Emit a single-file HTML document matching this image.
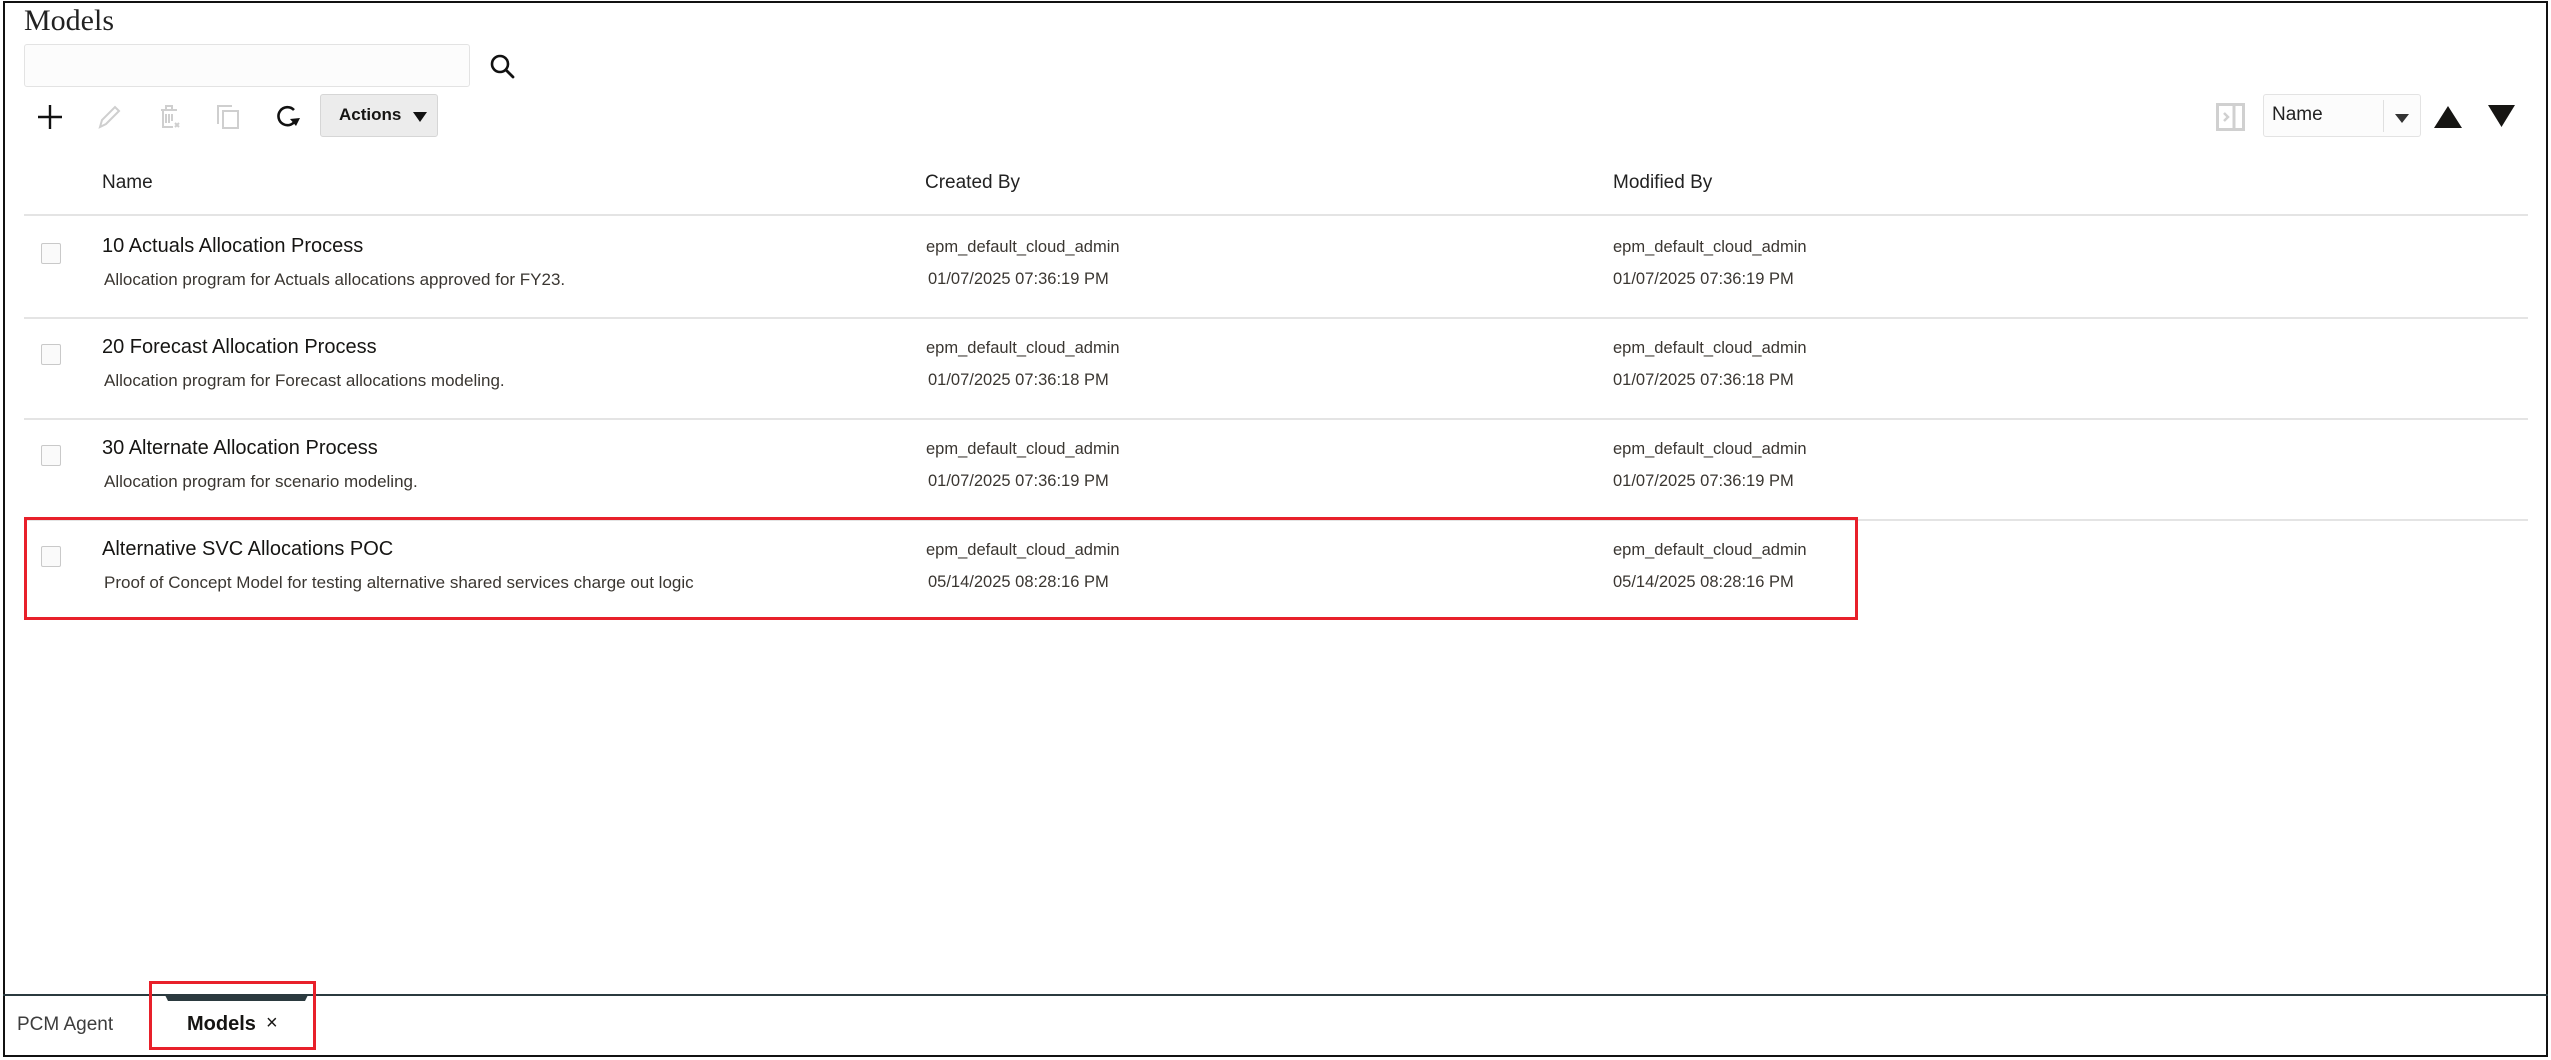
<!DOCTYPE html>
<html><head><meta charset="utf-8"><style>
*{margin:0;padding:0;box-sizing:border-box}
body{width:2551px;height:1060px;background:#fff;position:relative;overflow:hidden;font-family:"Liberation Sans",sans-serif;color:#161513}
.a{position:absolute;white-space:nowrap}
.frame{position:absolute;left:3px;top:1px;width:2545px;height:1056px;border:2px solid #111}
.hl{position:absolute;height:2px;background:#e4e4e4;left:24px;width:2504px}
.t{font-size:20px;color:#161513}
.d{font-size:17px;color:#3a3631}
.v{font-size:16.5px;color:#3a3631}
.cb{position:absolute;left:41px;width:20px;height:21px;border:1px solid #c9c9c9;border-radius:2px;background:#fafafa}
</style></head><body>
<div class="frame"></div>
<div class="a" style="left:24px;top:4px;font-family:'Liberation Serif',serif;font-size:30px;color:#222">Models</div>
<div class="a" style="left:24px;top:44px;width:446px;height:43px;border:1px solid #e3e3e3;border-radius:3px;background:#fcfcfc"></div>
<svg class="a" style="left:489px;top:53px" width="28" height="26" viewBox="0 0 28 26"><circle cx="11" cy="11" r="8" fill="none" stroke="#111" stroke-width="2.6"/><path d="M17 17L24 24" stroke="#111" stroke-width="2.8" stroke-linecap="round"/></svg>
<svg class="a" style="left:37px;top:104px" width="26" height="26"><path d="M13 1V25M1 13H25" stroke="#111" stroke-width="2.4"/></svg>
<svg class="a" style="left:96px;top:104px" width="26" height="26"><path d="M4 23L6 16L19 3L23 7L10 20Z" fill="none" stroke="#cfcfcf" stroke-width="2"/></svg>
<svg class="a" style="left:156px;top:104px" width="26" height="26"><path d="M5 6H21M10 6V2H16V6M7 6V23H17M10 10V19M13 10V19M16 10V17M19 19L23 23M23 19L19 23" fill="none" stroke="#cfcfcf" stroke-width="2"/></svg>
<svg class="a" style="left:215px;top:104px" width="26" height="26"><path d="M3 20V2H17" fill="none" stroke="#cfcfcf" stroke-width="2"/><rect x="8" y="7" width="15" height="17" fill="none" stroke="#cfcfcf" stroke-width="2"/></svg>
<svg class="a" style="left:274px;top:104px" width="28" height="26"><path d="M20 6A9 9 0 1 0 22 15" fill="none" stroke="#111" stroke-width="2.6"/><path d="M16 15L22 22L26 14Z" fill="#111"/></svg>
<div class="a" style="left:320px;top:94px;width:118px;height:43px;border:1px solid #d6d6d6;border-radius:3px;background:#ececec"></div>
<div class="a" style="left:339px;top:105px;font-size:17px;font-weight:bold">Actions</div>
<svg class="a" style="left:413px;top:112px" width="14" height="10"><path d="M0 0H14L7 10Z" fill="#111"/></svg>
<svg class="a" style="left:2216px;top:103px" width="29" height="28"><rect x="1.5" y="1.5" width="26" height="25" fill="none" stroke="#d0d0d0" stroke-width="3"/><path d="M18 2V26" stroke="#d0d0d0" stroke-width="3"/><path d="M8 10L12 14L8 18" fill="none" stroke="#d0d0d0" stroke-width="2.5"/></svg>
<div class="a" style="left:2263px;top:94px;width:158px;height:43px;border:1px solid #e3e3e3;border-radius:3px;background:#fcfcfc"></div>
<div class="a" style="left:2383px;top:100px;width:1px;height:32px;background:#e0e0e0"></div>
<div class="a" style="left:2272px;top:104px;font-size:19px;color:#222">Name</div>
<svg class="a" style="left:2395px;top:114px" width="14" height="9"><path d="M0 0H14L7 9Z" fill="#333"/></svg>
<svg class="a" style="left:2434px;top:106px" width="28" height="22"><path d="M0 22H28L14 0Z" fill="#161513"/></svg>
<svg class="a" style="left:2488px;top:105px" width="27" height="22"><path d="M0 0H27L13.5 22Z" fill="#161513"/></svg>
<div class="a" style="left:102px;top:172px;font-size:19px;color:#222">Name</div>
<div class="a" style="left:925px;top:172px;font-size:19px;color:#222">Created By</div>
<div class="a" style="left:1613px;top:172px;font-size:19px;color:#222">Modified By</div>
<div class="hl" style="top:214px"></div>
<div class="cb" style="top:243px"></div>
<div class="a t" style="left:102px;top:235px">10 Actuals Allocation Process</div>
<div class="a d" style="left:104px;top:270px">Allocation program for Actuals allocations approved for FY23.</div>
<div class="a v" style="left:926px;top:238px">epm_default_cloud_admin</div>
<div class="a v" style="left:928px;top:270px">01/07/2025 07:36:19 PM</div>
<div class="a v" style="left:1613px;top:238px">epm_default_cloud_admin</div>
<div class="a v" style="left:1613px;top:270px">01/07/2025 07:36:19 PM</div>
<div class="hl" style="top:317px"></div>
<div class="cb" style="top:344px"></div>
<div class="a t" style="left:102px;top:336px">20 Forecast Allocation Process</div>
<div class="a d" style="left:104px;top:371px">Allocation program for Forecast allocations modeling.</div>
<div class="a v" style="left:926px;top:339px">epm_default_cloud_admin</div>
<div class="a v" style="left:928px;top:371px">01/07/2025 07:36:18 PM</div>
<div class="a v" style="left:1613px;top:339px">epm_default_cloud_admin</div>
<div class="a v" style="left:1613px;top:371px">01/07/2025 07:36:18 PM</div>
<div class="hl" style="top:418px"></div>
<div class="cb" style="top:445px"></div>
<div class="a t" style="left:102px;top:437px">30 Alternate Allocation Process</div>
<div class="a d" style="left:104px;top:472px">Allocation program for scenario modeling.</div>
<div class="a v" style="left:926px;top:440px">epm_default_cloud_admin</div>
<div class="a v" style="left:928px;top:472px">01/07/2025 07:36:19 PM</div>
<div class="a v" style="left:1613px;top:440px">epm_default_cloud_admin</div>
<div class="a v" style="left:1613px;top:472px">01/07/2025 07:36:19 PM</div>
<div class="hl" style="top:519px"></div>
<div class="cb" style="top:546px"></div>
<div class="a t" style="left:102px;top:538px">Alternative SVC Allocations POC</div>
<div class="a d" style="left:104px;top:573px">Proof of Concept Model for testing alternative shared services charge out logic</div>
<div class="a v" style="left:926px;top:541px">epm_default_cloud_admin</div>
<div class="a v" style="left:928px;top:573px">05/14/2025 08:28:16 PM</div>
<div class="a v" style="left:1613px;top:541px">epm_default_cloud_admin</div>
<div class="a v" style="left:1613px;top:573px">05/14/2025 08:28:16 PM</div>
<div class="a" style="left:24px;top:517px;width:1834px;height:103px;border:3px solid #e8202a"></div>
<div class="a" style="left:3px;top:994px;width:2545px;height:2px;background:#2b3a3f"></div>
<svg class="a" style="left:165px;top:995px" width="143" height="6"><path d="M0 0H143L140 6H3Z" fill="#2b3a3f"/></svg>
<div class="a" style="left:17px;top:1014px;font-size:19px;color:#3d3d3d">PCM Agent</div>
<div class="a" style="left:187px;top:1013px;font-size:20px;font-weight:bold;color:#161513">Models</div>
<div class="a" style="left:266px;top:1012px;font-size:20px;color:#161513">×</div>
<div class="a" style="left:149px;top:981px;width:167px;height:69px;border:3px solid #e8202a"></div>
</body></html>
